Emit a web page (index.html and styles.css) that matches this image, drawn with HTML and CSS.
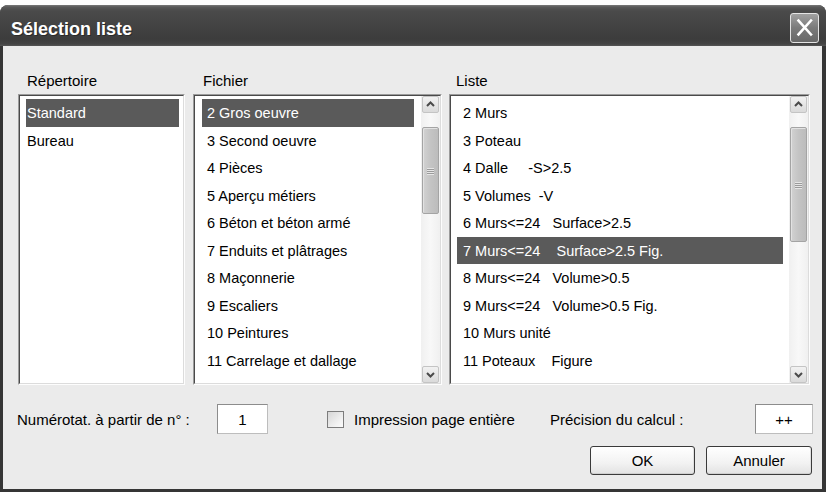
FILE: index.html
```html
<!DOCTYPE html>
<html lang="fr">
<head>
<meta charset="utf-8">
<title>Sélection liste</title>
<link rel="stylesheet" href="styles.css">
</head>
<body>
<div class="window">
  <div class="titlebar">
    <div class="title">Sélection liste</div>
    <div class="close">
      <svg width="27" height="28" viewBox="0 0 27 28"><path d="M7.5 6.5 L20 20.5 M20 6.5 L7.5 20.5" stroke="#fff" stroke-width="2.6" stroke-linecap="square" fill="none"/></svg>
    </div>
  </div>
  <div class="client">
    <div class="columns">
      <div class="col col-rep">
        <div class="label">Répertoire</div>
        <div class="list">
          <div class="list-in">
            <div class="items items-rep">
              <div class="item sel">Standard</div>
              <div class="item">Bureau</div>
            </div>
          </div>
        </div>
      </div>
      <div class="col col-fic">
        <div class="label">Fichier</div>
        <div class="list">
          <div class="list-in">
            <div class="items items-fic">
              <div class="item sel">2 Gros oeuvre</div>
              <div class="item">3 Second oeuvre</div>
              <div class="item">4 Pièces</div>
              <div class="item">5 Aperçu métiers</div>
              <div class="item">6 Béton et béton armé</div>
              <div class="item">7 Enduits et plâtrages</div>
              <div class="item">8 Maçonnerie</div>
              <div class="item">9 Escaliers</div>
              <div class="item">10 Peintures</div>
              <div class="item">11 Carrelage et dallage</div>
            </div>
            <div class="sb">
              <div class="sbtn"><svg width="15" height="15" viewBox="0 0 15 15"><path d="M4 9 L7.5 5.5 L11 9" stroke="#4a4a4a" stroke-width="2" fill="none"/></svg></div>
              <div class="thumb thumb-fic"><svg width="9" height="8" viewBox="0 0 9 8"><path d="M1 1.5H8M1 3.5H8M1 5.5H8M1 7.5H8" stroke="#e6e6e6" stroke-width="1"/><path d="M1 2.5H8M1 4.5H8M1 6.5H8" stroke="#9a9a9a" stroke-width="1"/></svg></div>
              <div class="track"></div>
              <div class="sbtn"><svg width="15" height="15" viewBox="0 0 15 15"><path d="M4 6 L7.5 9.5 L11 6" stroke="#4a4a4a" stroke-width="2" fill="none"/></svg></div>
            </div>
          </div>
        </div>
      </div>
      <div class="col col-lis">
        <div class="label">Liste</div>
        <div class="list">
          <div class="list-in">
            <div class="items items-lis">
              <div class="item">2 Murs</div>
              <div class="item">3 Poteau</div>
              <div class="item">4 Dalle     -S&gt;2.5</div>
              <div class="item">5 Volumes  -V</div>
              <div class="item">6 Murs&lt;=24   Surface&gt;2.5</div>
              <div class="item sel">7 Murs&lt;=24    Surface&gt;2.5 Fig.</div>
              <div class="item">8 Murs&lt;=24   Volume&gt;0.5</div>
              <div class="item">9 Murs&lt;=24   Volume&gt;0.5 Fig.</div>
              <div class="item">10 Murs unité</div>
              <div class="item">11 Poteaux    Figure</div>
            </div>
            <div class="sb">
              <div class="sbtn"><svg width="15" height="15" viewBox="0 0 15 15"><path d="M4 9 L7.5 5.5 L11 9" stroke="#4a4a4a" stroke-width="2" fill="none"/></svg></div>
              <div class="thumb thumb-lis"><svg width="9" height="8" viewBox="0 0 9 8"><path d="M1 1.5H8M1 3.5H8M1 5.5H8M1 7.5H8" stroke="#e6e6e6" stroke-width="1"/><path d="M1 2.5H8M1 4.5H8M1 6.5H8" stroke="#9a9a9a" stroke-width="1"/></svg></div>
              <div class="track"></div>
              <div class="sbtn"><svg width="15" height="15" viewBox="0 0 15 15"><path d="M4 6 L7.5 9.5 L11 6" stroke="#4a4a4a" stroke-width="2" fill="none"/></svg></div>
            </div>
          </div>
        </div>
      </div>
    </div>
    <div class="options">
      <div class="opt-label opt-num">Numérotat. à partir de n° :</div>
      <div class="field field-num">1</div>
      <div class="check"></div>
      <div class="opt-label opt-imp">Impression page entière</div>
      <div class="opt-label opt-pre">Précision du calcul :</div>
      <div class="field field-pre">++</div>
    </div>
    <div class="actions">
      <div class="btn btn-ok">OK</div>
      <div class="btn btn-cancel">Annuler</div>
    </div>
  </div>
</div>
</body>
</html>
```

FILE: styles.css
```css
* { box-sizing: border-box; }
html, body { margin: 0; padding: 0; background: #fff; }
body {
  width: 826px;
  height: 492px;
  overflow: hidden;
  padding-top: 5px;
  font-family: "Liberation Sans", Arial, sans-serif;
  color: #000;
}
.window {
  width: 826px;
  height: 487px;
  display: flex;
  flex-direction: column;
  border-radius: 8px 8px 0 0;
  overflow: hidden;
  background: #353535;
}
.titlebar {
  height: 41px;
  flex: none;
  display: flex;
  justify-content: space-between;
  align-items: flex-start;
  padding: 0 7px 0 11px;
  background: linear-gradient(to bottom, #7a7a7a 0, #5a5a5a 2px, #4a4a4a 6px, #434343 20px, #3c3c3c 34px, #444 39px, #555 41px);
}
.title {
  margin-top: 14px;
  font-size: 18px;
  line-height: 20px;
  font-weight: bold;
  color: #fff;
  text-shadow: 1px 1px 0 #2a2a2a;
}
.close {
  margin-top: 8px;
  width: 29px;
  height: 30px;
  border: 1px solid #e4e4e4;
  border-radius: 3px;
  background: linear-gradient(to bottom, #a0a0a0, #7a7a7a 50%, #686868);
  display: flex;
  align-items: center;
  justify-content: center;
}
.client {
  flex: 1;
  margin: 0 4px 3px 3px;
  background: #ebebeb;
  padding: 26px 9px 14px 15px;
  display: flex;
  flex-direction: column;
}
.columns { display: flex; flex: none; }
.col { display: flex; flex-direction: column; flex: none; }
.col-rep { width: 167px; }
.col-fic { width: 249px; margin-left: 8px; }
.col-lis { width: 361px; margin-left: 7px; }
.label {
  height: 18px;
  line-height: 18px;
  font-size: 15px;
  margin-bottom: 4px;
}
.col-rep .label { padding-left: 9px; }
.col-fic .label { padding-left: 10px; }
.col-lis .label { padding-left: 7px; }
.list {
  height: 291px;
  border: 1px solid;
  border-color: #9c9c9c #fdfdfd #fdfdfd #9c9c9c;
}
.list-in {
  height: 100%;
  border: 1px solid;
  border-color: #4a4a4a #dcdcdc #dcdcdc #4a4a4a;
  background: #fff;
  display: flex;
  overflow: hidden;
}
.items { flex: 1; padding-top: 3px; overflow: hidden; }
.items-rep { padding-left: 6px; padding-right: 4px; }
.items-fic { padding-left: 7px; padding-right: 7px; }
.items-lis { padding-left: 6px; padding-right: 6px; }
.item {
  height: 27.5px;
  padding-top: 2px;
  line-height: 25.5px;
  font-size: 14.5px;
  white-space: pre;
  overflow: hidden;
}
.items-rep .item { padding-left: 1px; }
.items-fic .item { padding-left: 5px; }
.items-lis .item { padding-left: 6px; }
.item.sel { background: #5a5a5a; color: #fff; }
.sb {
  width: 19px;
  flex: none;
  display: flex;
  flex-direction: column;
  padding: 0 1px;
  background: linear-gradient(to right, #f0f0f0, #f8f8f8 50%, #f0f0f0);
}
.sbtn {
  height: 17px;
  flex: none;
  border: 1px solid #c4c4c4;
  border-radius: 2px;
  background: linear-gradient(to bottom, #f2f2f2, #dadada);
  display: flex;
  align-items: center;
  justify-content: center;
}
.thumb {
  flex: none;
  margin-top: 14px;
  border: 1px solid #a4a4a4;
  border-radius: 2px;
  background: linear-gradient(to right, #d2d2d2, #c4c4c4 50%, #bcbcbc);
  box-shadow: inset 1px 1px 0 #e2e2e2;
  display: flex;
  align-items: center;
  justify-content: center;
}
.thumb-fic { height: 87px; }
.thumb-lis { height: 115px; }
.track { flex: 1; }
.options {
  display: flex;
  align-items: center;
  height: 30px;
  margin-top: 19px;
  margin-left: -1px;
  flex: none;
}
.opt-label { font-size: 15px; white-space: nowrap; flex: none; }
.opt-num { width: 200px; }
.opt-imp { width: 196px; margin-left: 10px; }
.opt-pre { width: 205px; }
.field {
  height: 30px;
  flex: none;
  background: #fff;
  border: 1px solid;
  border-color: #8c8c8c #bdbdbd #bdbdbd #8c8c8c;
  font-size: 15px;
  display: flex;
  align-items: center;
  justify-content: center;
}
.field-num { width: 51px; }
.field-pre { width: 58px; }
.check {
  width: 17px;
  height: 17px;
  flex: none;
  margin-left: 59px;
  border: 1px solid #7c7c7c;
  background: linear-gradient(135deg, #d6d6d6, #f2f2f2 70%, #fbfbfb);
}
.actions {
  display: flex;
  justify-content: flex-end;
  gap: 11px;
  margin-top: 12px;
  margin-right: 1px;
  flex: none;
}
.btn {
  height: 29px;
  border: 1px solid #3a3a3a;
  border-radius: 3px;
  background: linear-gradient(to bottom, #ffffff, #f2f2f2 60%, #e2e2e2);
  box-shadow: inset 0 -1px 0 #cfcfcf, inset -1px 0 0 #e0e0e0;
  font-size: 15px;
  display: flex;
  align-items: center;
  justify-content: center;
}
.btn-ok { width: 105px; }
.btn-cancel { width: 106px; }
```
